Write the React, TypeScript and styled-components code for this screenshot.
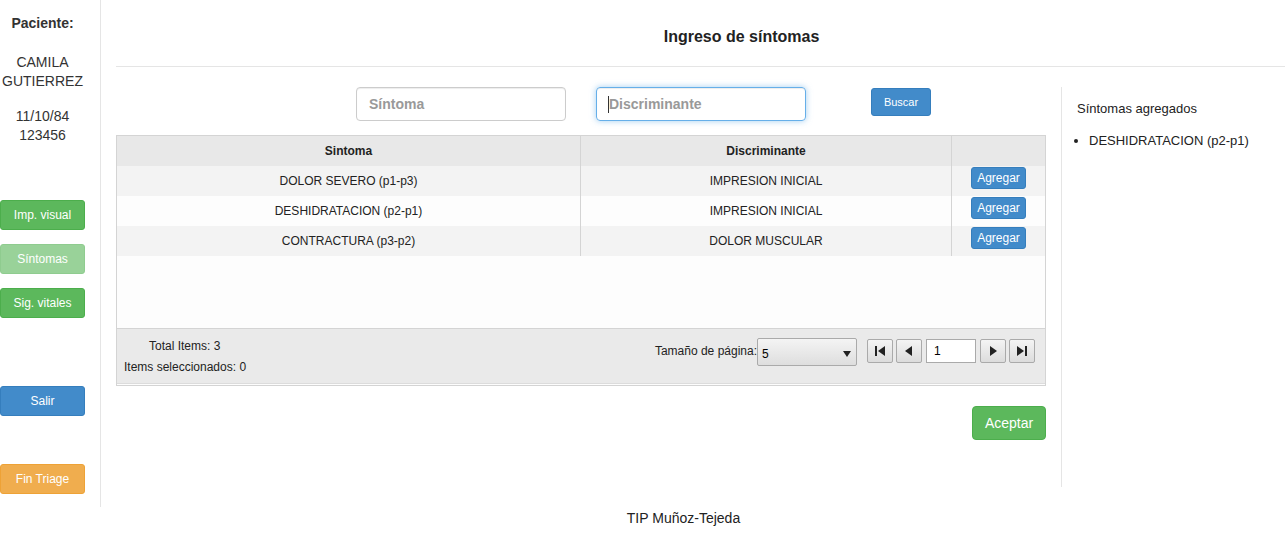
import React from "react";
import styled, { createGlobalStyle } from "styled-components";

const Global = createGlobalStyle`
  body {
    margin: 0;
    background: #fff;
    font-family: "Liberation Sans", Arial, sans-serif;
    color: #333;
  }
`;

const green = "#5cb85c";
const blue = "#428bca";
const orange = "#f0ad4e";

const Page = styled.div`
  display: flex;
  flex-direction: column;
`;

const Body = styled.div`
  display: flex;
`;

const Sidebar = styled.div`
  width: 85px;
  padding-right: 15px;
  height: 507px;
  border-right: 1px solid #e5e5e5;
  display: flex;
  flex-direction: column;
  align-items: center;
  font-size: 14px;
  text-align: center;
  box-sizing: content-box;
`;

const Label = styled.div`
  font-weight: bold;
  margin-top: 14px;
  line-height: 18px;
`;

const Block = styled.div<{ $mt: number }>`
  margin-top: ${(p) => p.$mt}px;
  line-height: 19px;
`;

const SideButton = styled.div<{ $bg: string; $border: string; $mt: number; $faded?: boolean }>`
  width: 85px;
  height: 30px;
  box-sizing: border-box;
  margin-top: ${(p) => p.$mt}px;
  background: ${(p) => p.$bg};
  border: 1px solid ${(p) => p.$border};
  border-radius: 3px;
  color: #fff;
  font-size: 12px;
  display: flex;
  align-items: center;
  justify-content: center;
  opacity: ${(p) => (p.$faded ? 0.62 : 1)};
`;

const Main = styled.div`
  flex: 1;
  padding-left: 15px;
  display: flex;
  flex-direction: column;
`;

const Title = styled.div`
  height: 67px;
  border-bottom: 1px solid #e5e5e5;
  box-sizing: border-box;
  display: flex;
  align-items: center;
  justify-content: center;
  padding-left: 82px;
  padding-top: 8px;
  font-size: 16px;
  font-weight: bold;
  color: #222;
`;

const Content = styled.div`
  display: flex;
  padding-top: 20px;
`;

const Center = styled.div`
  width: 930px;
  display: flex;
  flex-direction: column;
`;

const SearchRow = styled.div`
  display: flex;
  align-items: flex-start;
  padding-left: 240px;
  height: 48px;
`;

const Input = styled.div<{ $focus?: boolean; $ml?: number }>`
  width: 210px;
  height: 34px;
  box-sizing: border-box;
  margin-left: ${(p) => p.$ml ?? 0}px;
  border: 1px solid ${(p) => (p.$focus ? "#66afe9" : "#ccc")};
  box-shadow: ${(p) =>
    p.$focus
      ? "inset 0 1px 1px rgba(0,0,0,.075), 0 0 6px rgba(102,175,233,.6)"
      : "inset 0 1px 1px rgba(0,0,0,.075)"};
  border-radius: 4px;
  display: flex;
  align-items: center;
  padding-left: 12px;
  font-size: 14px;
  font-weight: bold;
  color: #999;
`;

const Caret = styled.span`
  display: inline-block;
  width: 1px;
  height: 17px;
  background: #333;
  margin-left: -1px;
`;

const Buscar = styled.div`
  margin-left: 65px;
  margin-top: 1px;
  width: 60px;
  height: 28px;
  box-sizing: border-box;
  background: ${blue};
  border: 1px solid #357ebd;
  border-radius: 3px;
  color: #fff;
  font-size: 11px;
  display: flex;
  align-items: center;
  justify-content: center;
`;

const Grid = styled.div`
  border: 1px solid #d4d4d4;
  background: #fdfdfd;
  font-size: 12px;
  color: #222;
`;

const GridRow = styled.div<{ $bg: string; $h: number }>`
  display: grid;
  grid-template-columns: 464px 371px 1fr;
  height: ${(p) => p.$h}px;
  background: ${(p) => p.$bg};
`;

const Cell = styled.div<{ $bold?: boolean; $last?: boolean }>`
  display: flex;
  align-items: center;
  justify-content: center;
  font-weight: ${(p) => (p.$bold ? "bold" : "normal")};
  border-right: ${(p) => (p.$last ? "none" : "1px solid #d4d4d4")};
  padding-bottom: ${(p) => (p.$bold ? 0 : 1)}px;
`;

const Agregar = styled.div`
  width: 55px;
  height: 22px;
  box-sizing: border-box;
  background: ${blue};
  border: 1px solid #357ebd;
  border-radius: 3px;
  color: #fff;
  font-size: 12px;
  display: flex;
  align-items: center;
  justify-content: center;
  margin-top: -6px;
`;

const Empty = styled.div`
  height: 72px;
`;

const GridFooter = styled.div`
  height: 54px;
  background: #eaeaea;
  border-top: 1px solid #d4d4d4;
  border-bottom: 1px solid #dcdcdc;
  margin-bottom: 1px;
  display: flex;
  justify-content: space-between;
`;

const Counts = styled.div`
  display: flex;
  flex-direction: column;
  padding-left: 7px;
  padding-top: 11px;
  gap: 8px;
  font-size: 12px;
  line-height: 13px;
`;

const Pager = styled.div`
  display: flex;
  align-items: flex-start;
  padding-top: 9px;
  padding-right: 10px;
  font-size: 12px;
`;

const PagerLabel = styled.span`
  margin-top: 6px;
`;

const Select = styled.div`
  width: 100px;
  height: 28px;
  box-sizing: border-box;
  border: 1px solid #aaa;
  border-radius: 2px;
  background: linear-gradient(#f4f4f4, #dedede);
  display: flex;
  align-items: center;
  justify-content: space-between;
  padding: 3px 5px 0 4px;
  font-size: 12px;
  color: #000;
  margin-right: 10px;
`;

const PageBtn = styled.div<{ $ml?: number }>`
  width: 26px;
  height: 24px;
  box-sizing: border-box;
  margin-left: ${(p) => p.$ml ?? 0}px;
  border: 1px solid #aaa;
  border-radius: 2px;
  background: linear-gradient(#f4f4f4, #dcdcdc);
  display: flex;
  align-items: center;
  justify-content: center;
  margin-top: 1px;
`;

const PageInput = styled.div`
  width: 50px;
  height: 24px;
  box-sizing: border-box;
  margin-left: 4px;
  margin-top: 1px;
  border: 1px solid #aaa;
  background: #fff;
  font-size: 12px;
  color: #000;
  display: flex;
  align-items: center;
  padding-left: 7px;
`;

const ActionRow = styled.div`
  display: flex;
  justify-content: flex-end;
  padding-top: 20px;
`;

const Aceptar = styled.div`
  width: 74px;
  height: 34px;
  box-sizing: border-box;
  background: ${green};
  border: 1px solid #4cae4c;
  border-radius: 4px;
  color: #fff;
  font-size: 14px;
  display: flex;
  align-items: center;
  justify-content: center;
`;

const Aside = styled.div`
  margin-left: 15px;
  border-left: 1px solid #e5e5e5;
  height: 400px;
  padding-left: 15px;
  font-size: 13px;
  color: #222;
`;

const AsideTitle = styled.div`
  margin-top: 14px;
`;

const AsideList = styled.ul`
  margin: 17px 0 0;
  padding-left: 12px;
  li {
    line-height: 16px;
  }
`;

const Footer = styled.div`
  text-align: center;
  font-size: 14px;
  color: #222;
  padding-top: 3px;
  padding-left: 82px;
`;

const Arrow: React.FC<{ kind: "first" | "prev" | "next" | "last" }> = ({ kind }) => {
  const tri = {
    first: "M11 1 L11 11 L4 6 Z",
    prev: "M9 1 L9 11 L2 6 Z",
    next: "M3 1 L3 11 L10 6 Z",
    last: "M1 1 L1 11 L8 6 Z",
  }[kind];
  return (
    <svg width="12" height="12" viewBox="0 0 12 12">
      <path d={tri} fill="#222" />
      {kind === "first" && <rect x="1" y="1" width="2" height="10" fill="#222" />}
      {kind === "last" && <rect x="9" y="1" width="2" height="10" fill="#222" />}
    </svg>
  );
};

const rows = [
  { s: "DOLOR SEVERO (p1-p3)", d: "IMPRESION INICIAL" },
  { s: "DESHIDRATACION (p2-p1)", d: "IMPRESION INICIAL" },
  { s: "CONTRACTURA (p3-p2)", d: "DOLOR MUSCULAR" },
];

export default function App() {
  return (
    <Page>
      <Global />
      <Body>
        <Sidebar>
          <Label>Paciente:</Label>
          <Block $mt={21}>
            CAMILA
            <br />
            GUTIERREZ
          </Block>
          <Block $mt={16}>
            11/10/84
            <br />
            123456
          </Block>
          <SideButton $bg={green} $border="#4cae4c" $mt={55}>
            Imp. visual
          </SideButton>
          <SideButton $bg={green} $border="#4cae4c" $mt={14} $faded>
            Síntomas
          </SideButton>
          <SideButton $bg={green} $border="#4cae4c" $mt={14}>
            Sig. vitales
          </SideButton>
          <SideButton $bg={blue} $border="#357ebd" $mt={68}>
            Salir
          </SideButton>
          <SideButton $bg={orange} $border="#eea236" $mt={48}>
            Fin Triage
          </SideButton>
        </Sidebar>
        <Main>
          <Title>Ingreso de síntomas</Title>
          <Content>
            <Center>
              <SearchRow>
                <Input>Síntoma</Input>
                <Input $focus $ml={30}>
                  <Caret />
                  Discriminante
                </Input>
                <Buscar>Buscar</Buscar>
              </SearchRow>
              <Grid>
                <GridRow $bg="#e8e8e8" $h={30}>
                  <Cell $bold>Sintoma</Cell>
                  <Cell $bold>Discriminante</Cell>
                  <Cell $last />
                </GridRow>
                {rows.map((r, i) => (
                  <GridRow key={i} $bg={i % 2 === 0 ? "#f3f3f3" : "#fdfdfd"} $h={30}>
                    <Cell>{r.s}</Cell>
                    <Cell>{r.d}</Cell>
                    <Cell $last>
                      <Agregar>Agregar</Agregar>
                    </Cell>
                  </GridRow>
                ))}
                <Empty />
                <GridFooter>
                  <Counts>
                    <span style={{ paddingLeft: 25 }}>Total Items: 3</span>
                    <span>Items seleccionados: 0</span>
                  </Counts>
                  <Pager>
                    <PagerLabel>Tamaño de página:</PagerLabel>
                    <Select>
                      <span>5</span>
                      <svg width="8" height="8" viewBox="0 0 8 8">
                        <path d="M0 1 L8 1 L4 7 Z" fill="#222" />
                      </svg>
                    </Select>
                    <PageBtn>
                      <Arrow kind="first" />
                    </PageBtn>
                    <PageBtn $ml={3}>
                      <Arrow kind="prev" />
                    </PageBtn>
                    <PageInput>1</PageInput>
                    <PageBtn $ml={4}>
                      <Arrow kind="next" />
                    </PageBtn>
                    <PageBtn $ml={3}>
                      <Arrow kind="last" />
                    </PageBtn>
                  </Pager>
                </GridFooter>
              </Grid>
              <ActionRow>
                <Aceptar>Aceptar</Aceptar>
              </ActionRow>
            </Center>
            <Aside>
              <AsideTitle>Síntomas agregados</AsideTitle>
              <AsideList>
                <li>DESHIDRATACION (p2-p1)</li>
              </AsideList>
            </Aside>
          </Content>
        </Main>
      </Body>
      <Footer>TIP Muñoz-Tejeda</Footer>
    </Page>
  );
}
